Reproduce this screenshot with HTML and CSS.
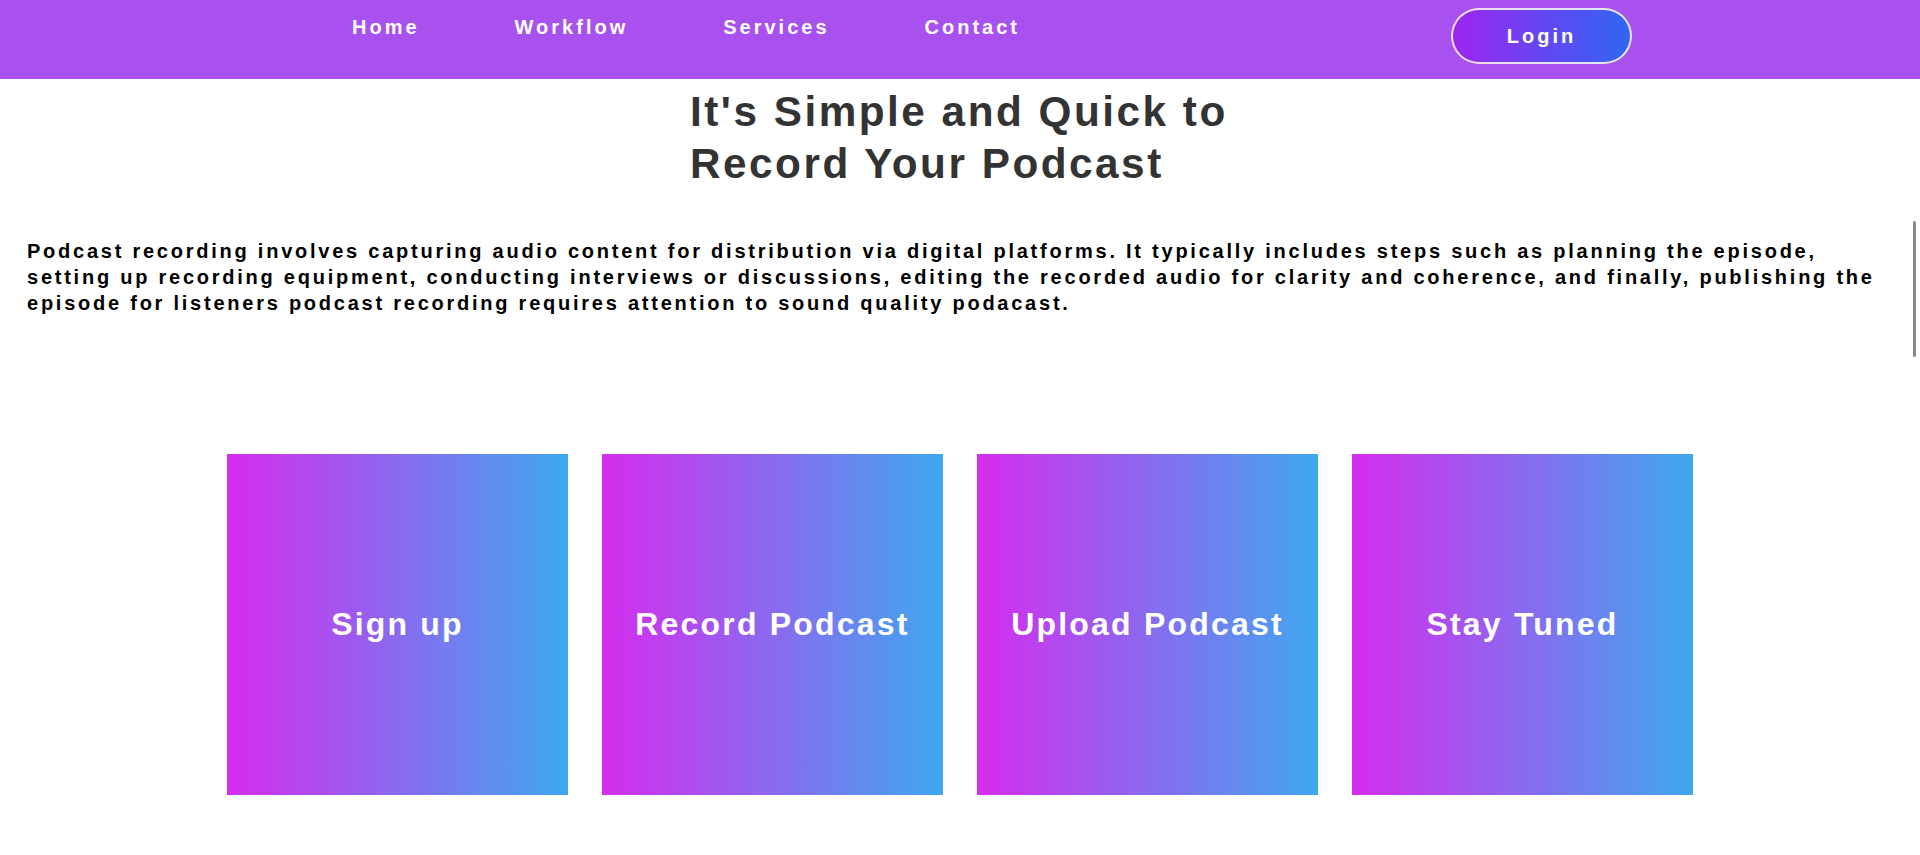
FILE: index.html
```html
<!DOCTYPE html>
<html lang="en">
<head>
<meta charset="utf-8">
<title>Podcast Workflow</title>
<link rel="stylesheet" href="styles.css">
</head>
<body>
<header class="topbar">
  <nav class="nav">
    <ul class="nav-links">
      <li><a href="#" class="nav-link">Home</a></li>
      <li><a href="#" class="nav-link">Workflow</a></li>
      <li><a href="#" class="nav-link">Services</a></li>
      <li><a href="#" class="nav-link">Contact</a></li>
    </ul>
  </nav>
  <a href="#" class="login-btn">Login</a>
</header>
<main class="content">
  <section class="intro">
    <h1 class="intro-title">It's Simple and Quick to Record Your Podcast</h1>
    <p class="intro-text">Podcast recording involves capturing audio content for distribution via digital platforms. It typically includes steps such as planning the episode, setting up recording equipment, conducting interviews or discussions, editing the recorded audio for clarity and coherence, and finally, publishing the episode for listeners podcast recording requires attention to sound quality podacast.</p>
  </section>
  <section class="steps">
    <div class="step-card">Sign up</div>
    <div class="step-card">Record Podcast</div>
    <div class="step-card">Upload Podcast</div>
    <div class="step-card">Stay Tuned</div>
  </section>
</main>
<div class="scroll-thumb"></div>
</body>
</html>
```
FILE: styles.css
```css
html, body {
  margin: 0;
  padding: 0;
  background: #ffffff;
}

body {
  font-family: "Liberation Sans", Arial, sans-serif;
  font-weight: bold;
  color: #000;
  min-height: 855px;
  overflow: hidden;
}

.topbar {
  height: 79px;
  background: #a951ee;
  display: flex;
  align-items: flex-start;
}

.nav-links {
  list-style: none;
  margin: 0;
  padding: 16px 0 0 352px;
  display: flex;
  gap: 95px;
}

.nav-link {
  color: #ffffff;
  text-decoration: none;
  font-size: 20px;
  letter-spacing: 3px;
  line-height: 23px;
}

.login-btn {
  margin: 8px 288px 0 auto;
  width: 181px;
  height: 56px;
  box-sizing: border-box;
  border: 2px solid rgba(255, 255, 255, 0.85);
  border-radius: 28px;
  background: linear-gradient(to right, #9d26f0, #2f66f2);
  color: #ffffff;
  text-decoration: none;
  font-size: 20px;
  letter-spacing: 3px;
  display: flex;
  align-items: center;
  justify-content: center;
}

.intro-title {
  width: 540px;
  margin: 7px auto 0;
  font-size: 42.3px;
  line-height: 52px;
  letter-spacing: 2.5px;
  color: #333333;
}

.intro-text {
  margin: 48px 0 0;
  padding: 0 27px;
  font-size: 20px;
  line-height: 26px;
  letter-spacing: 2.76px;
  color: #000;
}

.steps {
  margin-top: 138px;
  display: flex;
  justify-content: center;
  gap: 34px;
}

.step-card {
  width: 341px;
  height: 341px;
  background: linear-gradient(to right, #d62cee, #3ea8ef);
  color: #ffffff;
  font-size: 32px;
  letter-spacing: 2.2px;
  display: flex;
  align-items: center;
  justify-content: center;
}

.scroll-thumb {
  position: absolute;
  top: 221px;
  right: 4px;
  width: 3px;
  height: 136px;
  background: #8a8a8a;
  border-radius: 2px;
}
```
